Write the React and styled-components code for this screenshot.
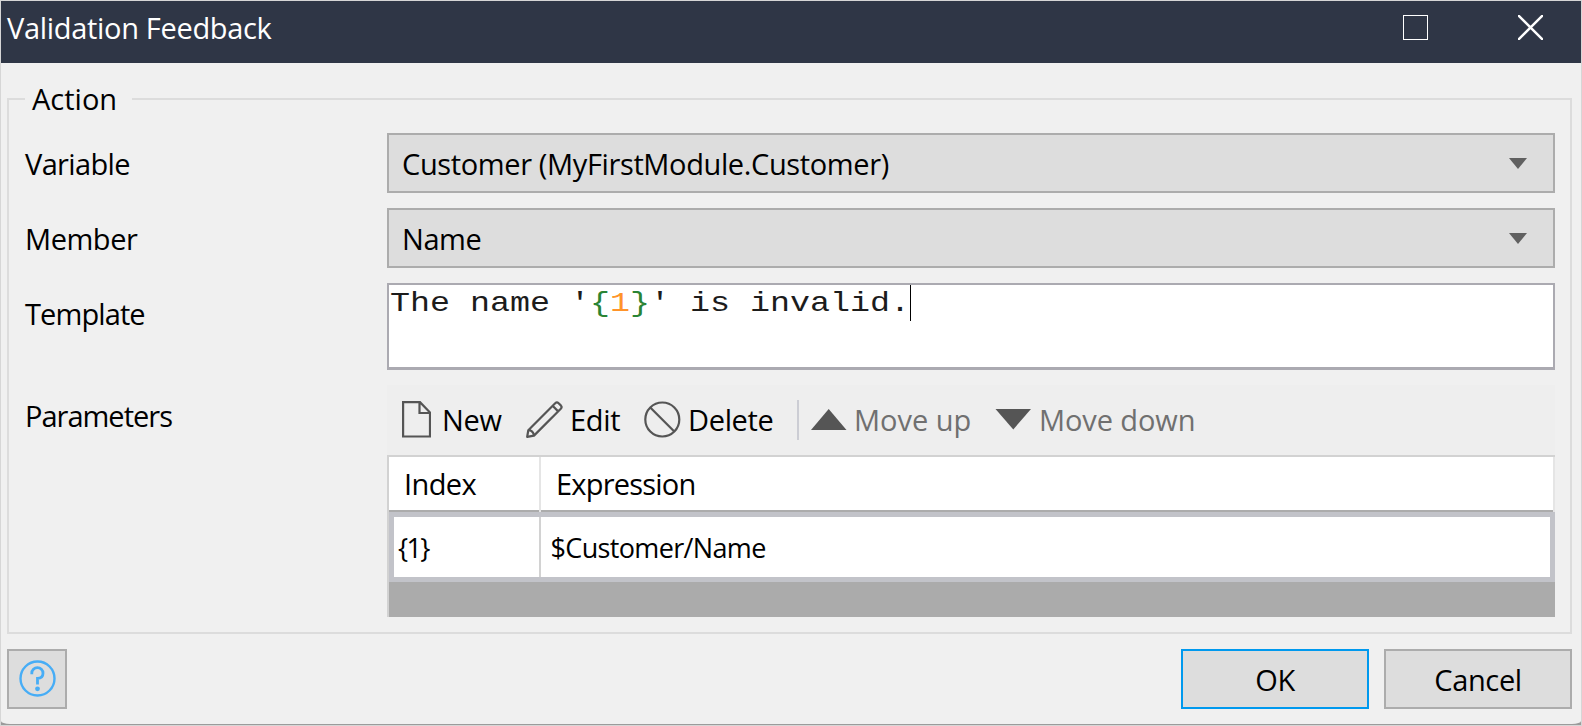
import React from "react";
import styled, { createGlobalStyle } from "styled-components";

const GlobalStyle = createGlobalStyle`
  *, *::before, *::after { box-sizing: border-box; }
  body { margin: 0; background: #d6d6d6; }
`;

const Window = styled.div`
  width: 1582px;
  height: 726px;
  display: flex;
  flex-direction: column;
  border: 1px solid #d6d6d6;
  background: #9b9b9b;
  font-family: "Open Sans", "Noto Sans", sans-serif;
  font-size: 29px;
  color: #000;
  overflow: hidden;
`;

const TitleBar = styled.header`
  flex: none;
  height: 62px;
  display: flex;
  align-items: flex-start;
  justify-content: space-between;
  background: #2f3646;
  color: #fff;
  padding: 14px 38px 0 6px;
`;

const Title = styled.h1`
  margin: 0;
  font-size: 29px;
  font-weight: 400;
  line-height: 26px;
`;

const WindowButtons = styled.div`
  display: flex;
  gap: 90px;
  svg { display: block; }
`;

const Body = styled.main`
  flex: none;
  height: 661px;
  display: flex;
  flex-direction: column;
  background: #f0f0f0;
  padding: 16px 9px 0 6px;
  border-radius: 0 0 9px 9px / 0 0 3px 3px;
`;

const Group = styled.fieldset`
  margin: 0;
  min-width: 0;
  border: 2px solid #dcdcdc;
  padding: 14px 15px 15px 16px;
`;

const Legend = styled.legend`
  width: 107px;
  height: 40px;
  padding: 0 0 0 7px;
  line-height: 40px;
`;

const Form = styled.div`
  display: grid;
  grid-template-columns: 362px 1fr;
  row-gap: 15px;
`;

const Label = styled.label`
  height: 60px;
  line-height: 60px;
  padding-top: 1px;
`;

const Text = styled.span`
  white-space: pre;
  letter-spacing: ${(p) => p.$track || 0}px;
`;

const Select = styled.div`
  height: 60px;
  display: flex;
  align-items: center;
  justify-content: space-between;
  border: 2px solid #acacac;
  background: #dddddd;
  padding: 0 26px 0 13px;
  svg { display: block; }
`;

const Template = styled.div`
  height: 87px;
  display: flex;
  border: 2px solid #abaab1;
  border-bottom-width: 3px;
  background: #fff;
  padding-left: 1px;
  font-family: "Liberation Mono", monospace;
  font-size: 28px;
  line-height: 38px;
  color: #1c1c1c;
  white-space: pre;
`;

const WideText = styled.span`
  width: 520px;
  transform: scaleX(1.19);
  transform-origin: 0 0;
`;

const Brace = styled.span`color: #2a8434;`;
const Digit = styled.span`color: #ff9429;`;
const Caret = styled.span`
  width: 1px;
  height: 36px;
  background: #000;
`;

const Toolbar = styled.div`
  height: 70px;
  display: flex;
  align-items: center;
  background: #eeeeee;
  padding-left: 15px;
`;

const Tool = styled.div`
  display: flex;
  align-items: center;
  width: ${(p) => p.$w}px;
  height: 42px;
  padding-bottom: 2px;
  color: ${(p) => (p.$disabled ? "#707070" : "#000")};
  svg { display: block; flex: none; margin-right: ${(p) => p.$gap}px; }
  span { padding-top: 2px; line-height: 40px; }
`;

const Separator = styled.div`
  width: 2px;
  height: 40px;
  margin-right: 12px;
  background: #cccdd4;
`;

const Grid = styled.div`
  height: 162px;
  border: solid #d2d2d2;
  border-width: 2px 0 0 2px;
  background: #ababab;
`;

const HeaderRow = styled.div`
  display: flex;
  height: 55px;
`;

const HeaderCell = styled.div`
  ${(p) => (p.$w ? `width: ${p.$w}px;` : "flex: 1;")}
  display: flex;
  border-right: 2px solid #e5e5e5;
  background: #fff;
  span {
    flex: 1;
    border-bottom: 2px solid #acacac;
    padding: 1px 0 0 15px;
    line-height: 52px;
  }
`;

const DataRow = styled.div`
  display: flex;
  height: 70px;
  border: 5px solid #c2c3c9;
  background: #fff;
  font-size: 27px;
`;

const Cell = styled.div`
  ${(p) => (p.$w ? `width: ${p.$w}px; border-right: 2px solid #d2d2d2;` : "flex: 1;")}
  padding: 1px 0 0 ${(p) => p.$pad}px;
  line-height: 60px;
`;

const Footer = styled.footer`
  display: flex;
  gap: 15px;
  margin-top: 15px;
`;

const Button = styled.button`
  width: ${(p) => p.$w || 188}px;
  height: 60px;
  display: flex;
  align-items: center;
  justify-content: center;
  border: 2px solid ${(p) => (p.$primary ? "#0099ee" : "#acacac")};
  border-radius: 0;
  background: #dddddd;
  padding: ${(p) => (p.$w ? "0 0 1px" : 0)};
  margin-right: ${(p) => (p.$push ? "auto" : 0)};
  font: inherit;
  color: #000;
  svg { display: block; }
`;

const Arrow = () => (
  <svg width="18" height="11" viewBox="0 0 18 11">
    <path d="M0 0H18L9 11Z" fill="#606060" />
  </svg>
);

export default function App() {
  return (
    <>
      <GlobalStyle />
      <Window>
        <TitleBar>
          <Title><Text $track={-0.32}>Validation Feedback</Text></Title>
          <WindowButtons>
            <svg width="25" height="25" viewBox="0 0 25 25">
              <rect x="0.5" y="0.5" width="24" height="24" fill="none" stroke="#fff" />
            </svg>
            <svg width="25" height="25" viewBox="0 0 25 25">
              <path d="M0 0L25 25M25 0L0 25" stroke="#fff" strokeWidth="2.4" />
            </svg>
          </WindowButtons>
        </TitleBar>
        <Body>
          <Group>
            <Legend><Text>Action</Text></Legend>
            <Form>
              <Label><Text $track={-0.65}>Variable</Text></Label>
              <Select><Text $track={-0.37}>Customer (MyFirstModule.Customer)</Text><Arrow /></Select>
              <Label><Text $track={-0.45}>Member</Text></Label>
              <Select><Text $track={-0.45}>Name</Text><Arrow /></Select>
              <Label><Text $track={-0.9}>Template</Text></Label>
              <Template>
                <WideText>The name '<Brace>{"{"}</Brace><Digit>1</Digit><Brace>{"}"}</Brace>' is invalid.</WideText>
                <Caret />
              </Template>
              <Label><Text $track={-1}>Parameters</Text></Label>
              <div>
                <Toolbar>
                  <Tool $w={124} $gap={11}>
                    <svg width="29" height="37" viewBox="0 0 29 37" fill="none" stroke="#555" strokeWidth="2.2">
                      <path d="M1.1 1.2H18L28 11.5V35.5H1.1ZM17.5 1.2V12H28" />
                    </svg>
                    <Text $track={-0.35}>New</Text>
                  </Tool>
                  <Tool $w={118} $gap={7}>
                    <svg width="37" height="37" viewBox="0 0 37 37" fill="none" stroke="#555" strokeWidth="2.2" strokeLinejoin="round">
                      <path d="M1.2 35.8L2.3 29.2L29.2 2.2Q30.9 0.6 32.6 2.2L34.8 4.4Q36.4 6.1 34.8 7.8L8 34.6ZM2.3 29.2Q7.2 29.5 8 34.6M26.6 4.8L32.2 10.4" />
                    </svg>
                    <Text $track={-0.35}>Edit</Text>
                  </Tool>
                  <Tool $w={153} $gap={7}>
                    <svg width="37" height="37" viewBox="0 0 37 37" fill="none" stroke="#555" strokeWidth="2.2">
                      <circle cx="18.3" cy="18.5" r="17" />
                      <path d="M6.3 6.5L30.3 30.5" />
                    </svg>
                    <Text $track={-0.35}>Delete</Text>
                  </Tool>
                  <Separator />
                  <Tool $w={184} $gap={7} $disabled>
                    <svg width="36" height="21" viewBox="0 0 36 21"><path d="M0 21L17.7 0L35.5 21Z" fill="#555" /></svg>
                    <Text>Move up</Text>
                  </Tool>
                  <Tool $w={210} $gap={8} $disabled>
                    <svg width="36" height="21" viewBox="0 0 36 21"><path d="M0.5 0H36L18.3 20.5Z" fill="#555" /></svg>
                    <Text $track={-0.1}>Move down</Text>
                  </Tool>
                </Toolbar>
                <Grid>
                  <HeaderRow>
                    <HeaderCell $w={152}><Text $track={-0.6}>Index</Text></HeaderCell>
                    <HeaderCell><Text $track={-0.8}>Expression</Text></HeaderCell>
                  </HeaderRow>
                  <DataRow>
                    <Cell $w={147} $pad={4}><Text $track={-1.7}>{"{1}"}</Text></Cell>
                    <Cell $pad={9.5}><Text $track={-0.65}>$Customer/Name</Text></Cell>
                  </DataRow>
                </Grid>
              </div>
            </Form>
          </Group>
          <Footer>
            <Button $w={60} $push aria-label="Help">
              <svg width="37" height="37" viewBox="0 0 37 37" fill="none" stroke="#47adf6">
                <circle cx="18.5" cy="18.5" r="17" strokeWidth="2.4" />
                <path d="M12.8 14.2V13.2A5.6 5.6 0 0 1 24 13.2C24 16.5 21.8 18.3 18.5 18.4V24.5" strokeWidth="2.8" />
                <circle cx="18.5" cy="28.8" r="2.4" fill="#47adf6" stroke="none" />
              </svg>
            </Button>
            <Button $primary><Text $track={-0.35}>OK</Text></Button>
            <Button><Text $track={-0.35}>Cancel</Text></Button>
          </Footer>
        </Body>
      </Window>
    </>
  );
}
